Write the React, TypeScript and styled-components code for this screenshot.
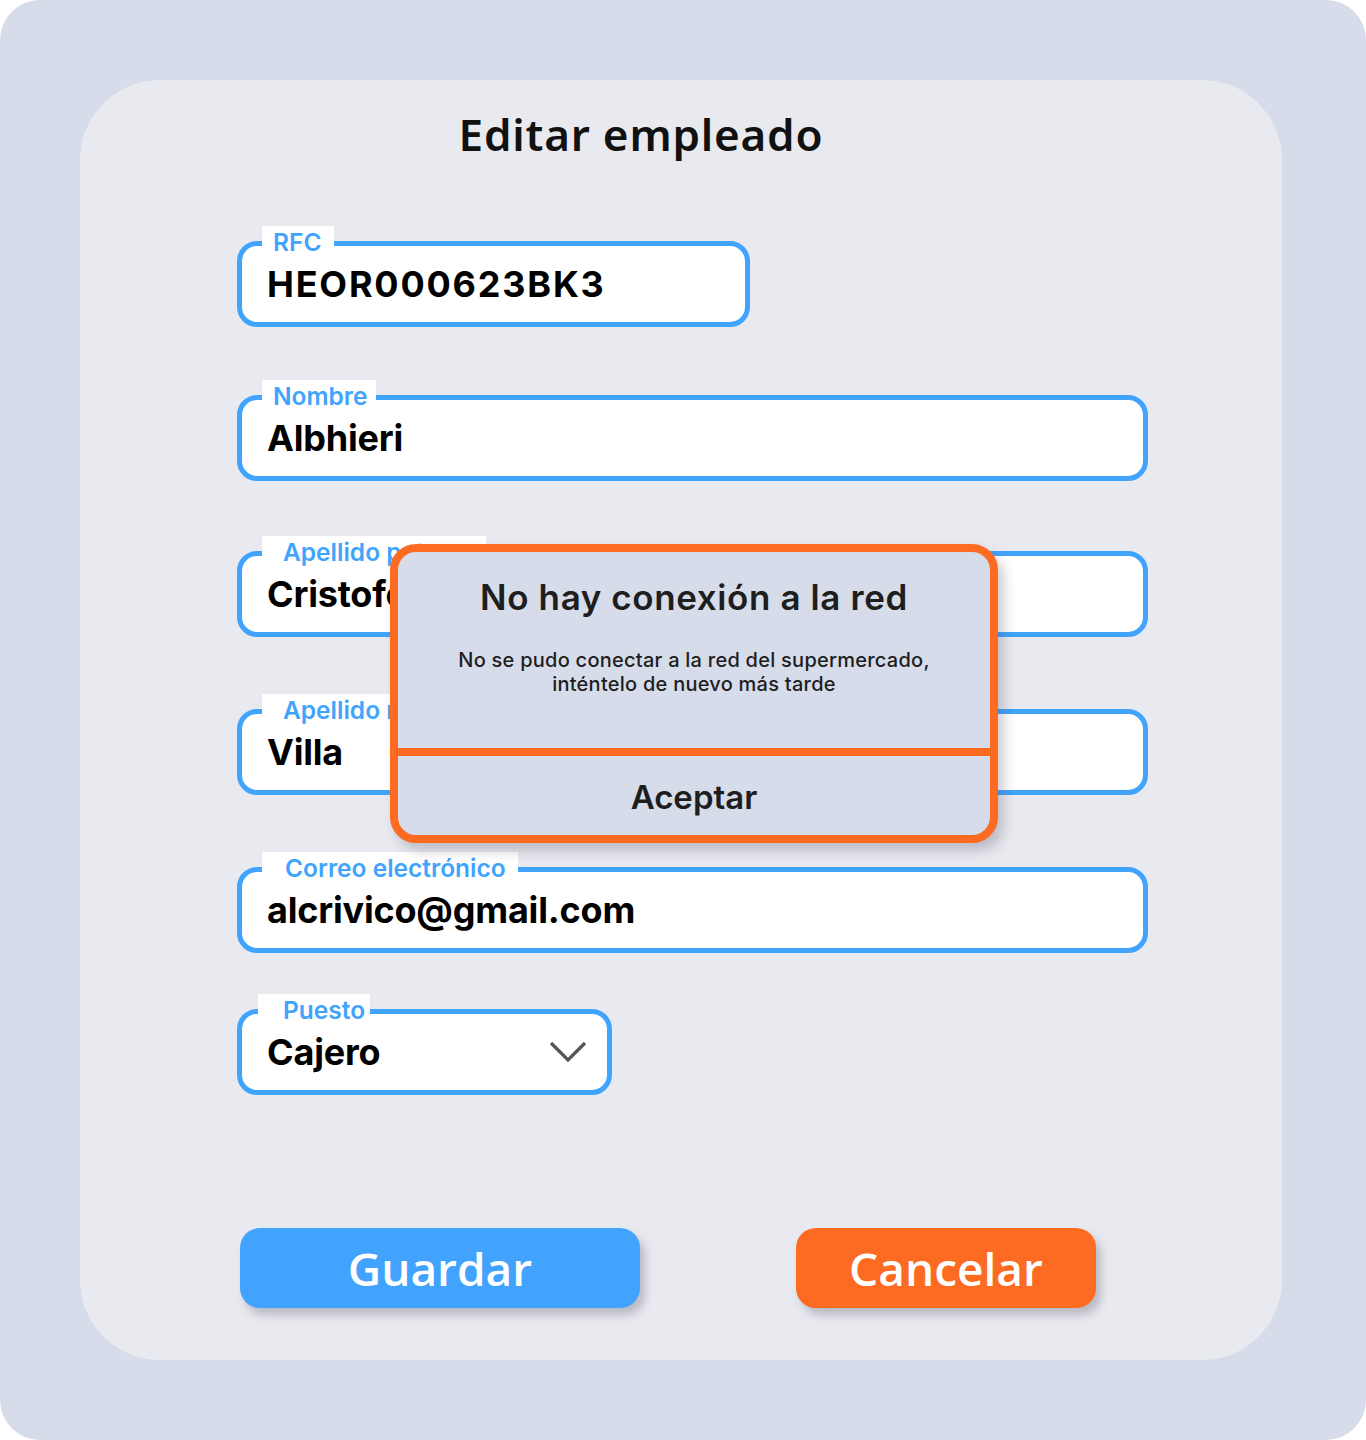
import React from "react";
import styled, { createGlobalStyle } from "styled-components";

const Global = createGlobalStyle`
  html, body { margin: 0; padding: 0; background: #ffffff; }
  * { box-sizing: border-box; }
`;

const BLUE = "#41a4fc";
const ORANGE = "#fd6a21";

const Frame = styled.div`
  width: 1366px;
  height: 1440px;
  border-radius: 40px;
  background: #d6dcea;
  padding: 80px 84px 80px 80px;
`;

const Card = styled.div`
  position: relative;
  height: 1280px;
  border-radius: 80px;
  background: #e9eaf0;
  padding-top: 25px;
  display: flex;
  flex-direction: column;
`;

const Title = styled.h1`
  margin: 0;
  padding-right: 80px;
  text-align: center;
  font-family: "Noto Sans", "Open Sans", sans-serif;
  font-weight: 600;
  font-size: 44px;
  letter-spacing: 0.8px;
  line-height: 58px;
  color: #111111;
`;

const Form = styled.div`
  display: flex;
  flex-direction: column;
  padding: 0 134px 0 157px;
`;

const FieldWrap = styled.div<{ $top: number; $width?: number }>`
  position: relative;
  margin-top: ${(p) => p.$top}px;
  width: ${(p) => (p.$width ? `${p.$width}px` : "100%")};
`;

const FieldBox = styled.div`
  height: 86px;
  border: 5px solid ${BLUE};
  border-radius: 20px;
  background: #ffffff;
  display: flex;
  align-items: center;
  justify-content: space-between;
  padding: 0 20px 0 25px;
`;

const Value = styled.span<{ $spacing?: number }>`
  font-family: Inter, "Liberation Sans", sans-serif;
  font-weight: 700;
  font-size: 36px;
  color: #000000;
  letter-spacing: ${(p) => p.$spacing ?? -0.2}px;
`;

const Label = styled.span<{ $left?: number; $pad?: number; $w?: number }>`
  position: absolute;
  top: -15px;
  left: ${(p) => p.$left ?? 25}px;
  height: 32px;
  ${(p) => (p.$w ? `width: ${p.$w}px;` : "")}
  background: #ffffff;
  padding: 1px 9px 0 ${(p) => p.$pad ?? 11}px;
  font-family: Inter, "Liberation Sans", sans-serif;
  font-weight: 600;
  font-size: 24.5px;
  line-height: 30px;
  color: ${BLUE};
  white-space: nowrap;
`;

const Chevron = styled.svg`
  width: 38px;
  height: 24px;
`;

const ButtonRow = styled.div`
  display: flex;
  gap: 156px;
  padding-left: 160px;
  margin-top: 133px;
`;

const Button = styled.button<{ $color: string; $w: number }>`
  width: ${(p) => p.$w}px;
  height: 80px;
  border: none;
  border-radius: 20px;
  background: ${(p) => p.$color};
  color: #ffffff;
  font-family: "Open Sans", "Noto Sans", sans-serif;
  font-weight: 600;
  font-size: 46px;
  line-height: 80px;
  padding: 0;
  box-shadow: 5px 7px 8px rgba(60, 60, 80, 0.28);
`;

const Dialog = styled.div`
  position: absolute;
  left: 310px;
  top: 464px;
  width: 608px;
  height: 299px;
  border: 8px solid ${ORANGE};
  border-radius: 26px;
  background: #d6dcea;
  box-shadow: 6px 8px 12px rgba(60, 60, 80, 0.25);
  display: flex;
  flex-direction: column;
  overflow: hidden;
`;

const DialogBody = styled.div`
  height: 204px;
  padding-top: 25px;
  display: flex;
  flex-direction: column;
  align-items: center;
  border-bottom: 8px solid ${ORANGE};
`;

const DialogTitle = styled.div`
  font-family: Inter, "Liberation Sans", sans-serif;
  font-weight: 600;
  font-size: 35px;
  letter-spacing: 0.6px;
  line-height: 40px;
  color: #1e1e1e;
`;

const DialogText = styled.div`
  margin-top: 31px;
  text-align: center;
  font-family: Inter, "Liberation Sans", sans-serif;
  font-weight: 500;
  font-size: 20px;
  letter-spacing: 0.25px;
  line-height: 24px;
  color: #1e1e1e;
`;

const DialogAction = styled.div`
  flex: 1;
  display: flex;
  align-items: center;
  justify-content: center;
  font-family: Inter, "Liberation Sans", sans-serif;
  font-weight: 600;
  font-size: 33px;
  color: #1e1e1e;
  padding-top: 2px;
`;

type FieldProps = {
  label: string;
  value: string;
  top: number;
  width?: number;
  labelW?: number;
  labelPad?: number;
  labelLeft?: number;
  spacing?: number;
  select?: boolean;
};

const Field = ({ label, value, top, width, labelW, labelPad, labelLeft, spacing, select }: FieldProps) => (
  <FieldWrap $top={top} $width={width}>
    <FieldBox>
      <Value $spacing={spacing}>{value}</Value>
      {select && (
        <Chevron viewBox="0 0 38 24">
          <polyline points="2,3 19,20 36,3" fill="none" stroke="#555555" strokeWidth="3.2" />
        </Chevron>
      )}
    </FieldBox>
    <Label $w={labelW} $pad={labelPad} $left={labelLeft}>
      {label}
    </Label>
  </FieldWrap>
);

export default function App() {
  return (
    <>
      <Global />
      <Frame>
        <Card>
          <Title>Editar empleado</Title>
          <Form>
            <Field label="RFC" value="HEOR000623BK3" top={78} width={513} labelW={72} spacing={1.8} />
            <Field label="Nombre" value="Albhieri" top={68} labelW={114} />
            <Field label="Apellido paterno" value="Cristoforo" top={70} labelPad={21} labelW={224} />
            <Field label="Apellido materno" value="Villa" top={72} labelPad={21} labelW={224} />
            <Field label="Correo electrónico" value="alcrivico@gmail.com" top={72} labelPad={23} labelW={256} />
            <Field label="Puesto" value="Cajero" top={56} width={375} labelLeft={21} labelPad={25} labelW={112} select />
          </Form>
          <ButtonRow>
            <Button $color="#41a3fd" $w={400}>Guardar</Button>
            <Button $color={ORANGE} $w={300}>Cancelar</Button>
          </ButtonRow>
          <Dialog>
            <DialogBody>
              <DialogTitle>No hay conexión a la red</DialogTitle>
              <DialogText>
                No se pudo conectar a la red del supermercado,
                <br />
                inténtelo de nuevo más tarde
              </DialogText>
            </DialogBody>
            <DialogAction>Aceptar</DialogAction>
          </Dialog>
        </Card>
      </Frame>
    </>
  );
}
